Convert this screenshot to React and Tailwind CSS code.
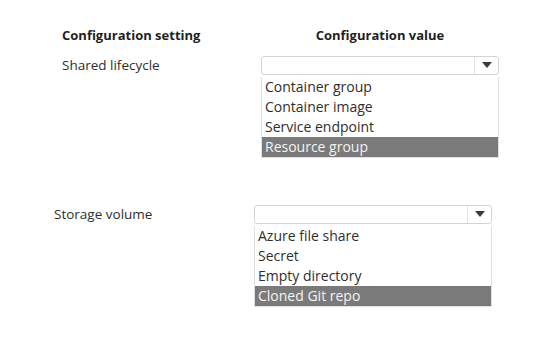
import React from "react";

const sections = [
  {
    label: "Shared lifecycle",
    labelCol: "w-[261px] pl-[62px]",
    options: ["Container group", "Container image", "Service endpoint", "Resource group"],
    selected: "Resource group",
    top: "mt-[10px]",
  },
  {
    label: "Storage volume",
    labelCol: "w-[254px] pl-[54px]",
    options: ["Azure file share", "Secret", "Empty directory", "Cloned Git repo"],
    selected: "Cloned Git repo",
    top: "mt-[47px]",
  },
];

function Dropdown({ options, selected }) {
  return (
    <div className="w-[238px]">
      <div className="flex h-[19px] rounded-[3px] border border-[#d4d4d4] bg-white">
        <div className="flex-1" />
        <div className="flex w-[24px] items-center justify-center border-l border-[#e2e2e2]">
          <svg width="10" height="6" viewBox="0 0 10 6">
            <path d="M0 0 L10 0 L5 6 Z" fill="#3a3a3a" />
          </svg>
        </div>
      </div>
      <div className="mt-[2px] border border-t-0 border-[#e0e0e0]">
        {options.map((opt) => (
          <div
            key={opt}
            className={`h-[20px] px-[3px] text-[14px] leading-[20px] ${
              opt === selected ? "bg-[#7a7a7a] text-[#f4f4f4]" : "text-[#2e2e2e]"
            }`}
          >
            {opt}
          </div>
        ))}
      </div>
    </div>
  );
}

export default function App() {
  return (
    <div
      className="h-[347px] w-[537px] overflow-hidden bg-white"
      style={{ fontFamily: '"Open Sans", "Noto Sans", sans-serif' }}
    >
      <div className="flex pt-[26px] text-[13px] font-bold text-[#1f1f1f]">
        <div className="w-[261px] pl-[62px]">Configuration setting</div>
        <div className="w-[238px] text-center">Configuration value</div>
      </div>

      {sections.map((s) => (
        <div key={s.label} className={`flex items-start ${s.top}`}>
          <div className={`${s.labelCol} shrink-0 text-[13.5px] leading-[19px] text-[#2e2e2e]`}>
            {s.label}
          </div>
          <Dropdown options={s.options} selected={s.selected} />
        </div>
      ))}
    </div>
  );
}
